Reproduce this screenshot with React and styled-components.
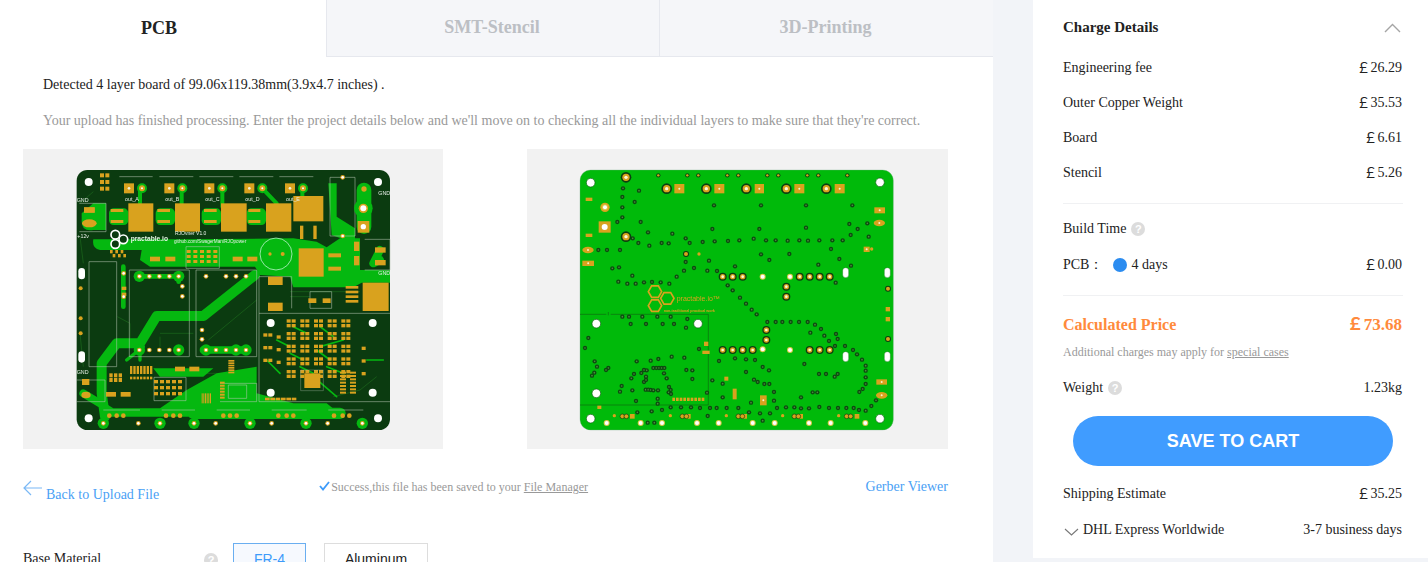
import React from "react";
import styled, { createGlobalStyle } from "styled-components";

const Global = createGlobalStyle`
  html, body { margin: 0; padding: 0; height: 562px; overflow: hidden; background: #f2f4f8; }
  body { font-family: "Liberation Serif", "Times New Roman", serif; font-size: 14px; color: #222; }
  * { box-sizing: border-box; }
`;

const Page = styled.div`display: flex; width: 1428px; height: 562px; overflow: hidden;`;
const Main = styled.main`width: 993px; height: 562px; background: #fff; flex: none; overflow: hidden;`;
const Tabs = styled.div`display: grid; grid-template-columns: 326px 333px 334px; height: 57px;`;
const Tab = styled.div`
  display: flex; align-items: center; justify-content: center; padding-bottom: 1px;
  font-size: 18px; font-weight: 700;
  color: ${p => (p.$active ? "#222" : "#bcbfc4")};
  background: ${p => (p.$active ? "#fff" : "#f5f6f9")};
  border-left: ${p => (p.$active ? "none" : "1px solid #e6e8ee")};
  border-bottom: ${p => (p.$active ? "none" : "1px solid #e6e8ee")};
  padding-right: ${p => (p.$active ? 8 : 2)}px;
`;
const Body = styled.div`padding: 0 45px 0 23px;`;
const Detected = styled.p`margin: 20px 0 0 20px; line-height: 16px; color: #222;`;
const Hint = styled.p`margin: 20px 0 0 20px; line-height: 16px; color: #999;`;
const Previews = styled.div`display: flex; justify-content: space-between; margin-top: 20px;`;
const Preview = styled.div`width: ${p => p.$w}px; height: 300px; background: #f2f2f2;`;
const Board = styled.svg`display: block; width: 100%; height: 100%; filter: blur(0.3px);`;
const LinkRow = styled.div`display: flex; align-items: flex-start; margin-top: 29px; height: 65px;`;
const BackLink = styled.a`display: flex; align-items: flex-start; color: #4a9ff5; line-height: 16px;`;
const BackIcon = styled.svg`width: 20px; height: 18px; margin: 2px 3px 0 0; flex: none;`;
const BackText = styled.span`margin-top: 9px;`;
const Saved = styled.div`display: flex; align-items: center; font-size: 12px; color: #999; line-height: 16px; margin: 1px 0 0 160px;`;
const Check = styled.svg`width: 11px; height: 10px; margin-right: 1px; margin-top: -3px;`;
const Under = styled.span`text-decoration: underline; color: ${p => p.$c || "#999"}; margin-left: ${p => p.$ml || 0}px;`;
const Gerber = styled.a`color: #4a9ff5; line-height: 16px; margin-left: auto; margin-top: 1px;`;
const Material = styled.div`display: flex; align-items: flex-start; height: 40px;`;
const MaterialLabel = styled.span`width: 181px; margin-top: 8px; line-height: 16px;`;
const HelpWrap = styled.span`width: 29px; margin-top: 9px;`;
const Choice = styled.div`
  height: 34px; width: ${p => p.$w}px; margin-right: ${p => p.$mr || 0}px; display: flex; justify-content: center; padding-top: 7px;
  font-family: "Liberation Sans", Arial, sans-serif; font-size: 14px;
  color: ${p => (p.$on ? "#3d9bfa" : "#222")};
  background: ${p => (p.$on ? "#f6f9fe" : "#fff")};
  border: 1px solid ${p => (p.$on ? "#6aaef0" : "#ddd")};
`;
const Help = styled.span`
  display: inline-flex; width: 14px; height: 14px; border-radius: 50%; align-items: center; justify-content: center;
  background: #dcdcdc; color: #fff; font: 700 11px "Liberation Sans", Arial, sans-serif; flex: none;
`;

const Side = styled.aside`
  width: 395px; height: 558px; margin-left: 40px; flex: none; background: #fff; padding: 18px 26px 0 30px;
`;
const Heading = styled.div`display: flex; justify-content: space-between; align-items: center; height: 18px; font-size: 15px; font-weight: 700; color: #222;`;
const Chevron = styled.svg`width: 17px; height: 10px; margin-right: 1px; margin-top: 2px;`;
const Rows = styled.div`margin-top: 14px;`;
const Row = styled.div`
  display: flex; justify-content: space-between; align-items: center;
  height: ${p => p.$h || 35}px; color: #222; line-height: 16px;
`;
const Label = styled.span`display: flex; align-items: center; gap: ${p => p.$gap ?? 5}px;`;
const Money = styled.span`font-family: "Liberation Serif", "Noto Sans CJK SC", serif;`;
const Divider = styled.hr`border: 0; border-top: 1px solid #f0f1f3; margin: ${p => p.$m}; width: 340px;`;
const Radio = styled.i`width: 14px; height: 14px; border-radius: 50%; background: #2b8cf0; margin-left: 10px; margin-right: 4px;`;
const PriceRow = styled(Row)`color: #ff8a3c; font-weight: 700; font-size: 16px;`;
const BigPrice = styled(Money)`font-size: 17px;`;
const Note = styled.div`font-size: 12px; color: #999; line-height: 16px; margin-top: -10px;`;
const WeightRow = styled(Row)`margin-top: 10px;`;
const CartButton = styled.button`
  display: block; width: 320px; height: 50px; margin: 11px 0 10px 10px; border: 0; border-radius: 25px;
  background: #409cff; color: #fff; font: 700 18px "Liberation Sans", Arial, sans-serif;
`;
const DownIcon = styled.svg`width: 15px; height: 8px; margin: 3px -1px 0 1px;`;

const DARK = "#0b3b10", BRIGHT = "#05b810", GOLD = "#d9a21e", SILK = "#e8efe8";

const zones = [
  "M65 160 L100 130 H138 V210 H100 Q65 215 65 185 Z",
  "M100 238 H360 L700 235 L770 245 L800 262 L840 235 H900 V330 L990 330 V368 H905 L880 382 H700 L690 350 L600 345 L585 320 H270 L240 300 L245 270 H120 Q95 265 100 238 Z",
  "M805 70 H830 V170 L885 205 V238 H850 L815 225 Z",
  "M120 720 L160 745 H300 L380 690 L470 640 L590 620 V700 L700 730 H800 L850 770 H120 Z",
  "M280 625 H460 L430 650 H300 Z",
];
const traces = [
  ["M585 345 L430 468 H290 L240 550 H170 L125 610 V700 L135 770", 30],
  ["M400 760 H840", 34],
  ["M190 320 V440", 14],
  ["M70 700 L120 730", 24],
  ["M240 85 V130 M365 85 V140 M487 85 V140 M607 85 L650 130 M727 85 V110", 12],
  ["M912 90 V200", 44],
  ["M960 270 L940 310 L960 300", 24],
  ["M238 349 H356 V365", 14],
  ["M430 570 H560", 22],
  ["M240 570 V600 M200 600 L250 560", 10],
  ["M920 600 H970 M850 540 L780 560 M760 650 L830 710", 5],
  ["M700 500 L740 520 M780 500 L820 530 M690 580 L730 600 M770 570 L810 600 M650 540 L690 560 M720 620 L760 640 M800 620 L850 640 M620 600 L660 640", 5],
  ["M500 660 H560 M480 680 V720", 18],
];
const bigPads = [[205,130,75,85],[345,130,75,85],[483,130,77,85],[618,130,76,85],[700,108,90,76],[716,265,75,85],[908,368,78,85],[624,350,44,25],[624,428,44,25]];
const tops = [207,328,448,568,690];
const thin = [[152,147,38,9],[292,147,38,9],[432,147,38,9],[565,147,36,9],[152,180,38,9],[292,180,38,9],[432,180,38,9],[565,180,36,9],[805,280,38,12],[805,320,38,12],[720,197,10,40],[760,197,10,40],[270,290,30,14],[316,290,30,14],[518,290,30,14],[562,290,30,14],[345,620,30,14],[388,620,30,14],[138,696,30,14],[182,696,30,14],[745,415,24,14],[788,415,24,14],[857,378,38,8],[857,392,38,8],[857,406,38,8],[857,420,38,8],[120,40,12,12],[120,60,12,12],[120,80,12,12],[136,40,12,12],[136,60,12,12],[136,80,12,12],[72,142,32,16],[66,657,22,18],[882,245,16,28],[882,288,16,28],[945,262,32,16],[945,300,32,16],[185,380,14,10],[185,398,14,10]];
const whiteHoles = [[86,66],[954,66],[86,775],[954,775],[632,489],[938,489],[632,698],[938,698]];
const leftDots = [[238,349],[268,349],[298,349],[328,349],[356,349],[367,379],[367,409],[438,349],[498,349],[528,349],[558,349],[426,510],[426,538],[238,570],[268,570],[298,570],[328,570],[356,570],[438,570],[468,570],[498,570],[528,570],[558,570],[130,790],[235,790],[300,790],[402,790],[467,790],[570,790],[635,790],[738,790],[803,790],[907,790],[848,52],[848,228],[191,340],[191,410]];
const halos = [[238,349],[356,349],[438,570],[528,570],[558,570],[356,570],[238,570],[130,790],[300,790],[402,790],[570,790],[738,790],[907,790]];
const smdRows = [];
for (let y = 478; y <= 630; y += 38) for (let x = 680; x <= 850; x += 41) smdRows.push([x, y], [x + 15, y], [x, y + 14], [x + 15, y + 14]);
for (let y = 520; y <= 620; y += 38) smdRows.push([610, y], [625, y], [650, y + 6], [905, y + 40]);
const extra = [];
for (let i = 0; i < 7; i++) extra.push([210 + i * 10, 618, 7, 24], [840, 635 + i * 10, 18, 6], [870, 635 + i * 10, 18, 6], [210 + i * 10, 650, 7, 8]);
for (let i = 0; i < 5; i++) for (let j = 0; j < 3; j++) extra.push([380 + i * 20, 270 + j * 15, 12, 9], [282 + i * 18, 660 + j * 18, 12, 10]);
for (let i = 0; i < 6; i++) extra.push([148 + (i % 3) * 14, 640 + (i > 2 ? 14 : 0), 10, 12], [150 + i * 8, 270 + (i % 2) * 12, 8, 10], [505, 600 + i * 7, 18, 5], [615 + i * 16, 713, 14, 8], [480, 665 + i * 9, 14, 6], [425 + i * 5, 700, 3, 30]);
const silk = [
  "M87 305 H170 V620 H87 Z", "M208 330 H388 V590 H208 Z", "M408 330 H590 V590 H408 Z", "M597 350 V725 H990", "M597 460 H990",
  "M810 52 H885 V228 H810 Z", "M178 50 H278 M298 50 H400 M418 50 H520 M538 50 H640 M658 50 H760", "M130 750 H240 M305 750 H405 M470 750 H570 M635 750 H740 M805 750 H910",
  "M58 130 H138 V215 H58 M50 660 H135 V725 H50", "M378 260 H478 V325 H378 Z M282 652 H378 V722 H282 Z", "M480 670 H590 V725 H480", "M750 395 H815 V445 H750 Z",
  "M914 238 H990 V330 H914 M597 350 H695 V445", "M505 675 H560 V715 H505 Z",
];
const darkLines = ["M60 230 L70 310", "M172 470 L210 490 V560 M300 520 H400 M300 530 V560 M690 395 H900 M690 410 H750", "M60 520 L70 620 M445 540 L590 420 M395 640 H470", "M100 95 L60 130", "M820 710 L900 690 L950 650"];

function LeftBoard() {
  return (
    <Board viewBox="-111 -33 1260 900">
      <rect x="50" y="30" width="940" height="780" rx="32" fill={DARK} />
      {darkLines.map((d, i) => <path key={i} d={d} stroke="#1d6a1d" strokeWidth="2" fill="none" />)}
      {zones.map((d, i) => <path key={i} d={d} fill={BRIGHT} />)}
      {traces.map(([d, w], i) => <path key={i} d={d} stroke={BRIGHT} strokeWidth={w} fill="none" strokeLinejoin="round" strokeLinecap="round" />)}
      {halos.map(([x, y], i) => <circle key={i} cx={x} cy={y} r="17" fill={BRIGHT} />)}
      {silk.map((d, i) => <path key={i} d={d} stroke="#b9c9b6" strokeWidth="1.6" fill="none" />)}
      {[205, 345, 483, 618].map(x => <rect key={x} x={x - 58} y="145" width="58" height="50" fill={BRIGHT} rx="14" />)}
      {bigPads.map(([x, y, w, h], i) => <rect key={i} x={x} y={y} width={w} height={h} fill={GOLD} />)}
      {thin.map(([x, y, w, h], i) => <rect key={i} x={x} y={y} width={w} height={h} fill={GOLD} />)}
      {smdRows.map(([x, y], i) => <rect key={i} x={x} y={y} width="12" height="10" fill={GOLD} />)}
      {extra.map(([x, y, w, h], i) => <rect key={i} x={x} y={y} width={w} height={h} fill={GOLD} />)}
      {tops.map((x, i) => (
        <g key={x}>
          <rect x={x - 15} y="70" width="30" height="30" fill={GOLD} />
          <circle cx={x} cy="85" r="4" fill="#f3f0d8" />
          <circle cx={x + 39} cy="85" r="15" fill={BRIGHT} />
          <circle cx={x + 39} cy="85" r="9" fill={GOLD} />
          <circle cx={x + 39} cy="85" r="3" fill="#fff" />
          <text x={x - 12} y="122" fontSize="16" fill={SILK} fontFamily="Liberation Sans">{"out_" + "ABCDE"[i]}</text>
        </g>
      ))}
      <circle cx="648" cy="282" r="48" fill={BRIGHT} stroke="#dfe" strokeWidth="2" />
      <circle cx="630" cy="282" r="5" fill={GOLD} /><circle cx="668" cy="282" r="6" fill={GOLD} />
      <circle cx="910" cy="145" r="28" fill={BRIGHT} /><circle cx="910" cy="145" r="14" fill={GOLD} /><circle cx="910" cy="145" r="9" fill="#fff" />
      <rect x="893" y="183" width="35" height="35" fill={GOLD} /><circle cx="910" cy="200" r="8" fill="#fff" />
      <ellipse cx="88" cy="190" rx="22" ry="12" fill={GOLD} /><rect x="72" y="142" width="32" height="16" fill={GOLD} />
      <ellipse cx="78" cy="705" rx="14" ry="10" fill={GOLD} />
      <circle cx="912" cy="87" r="8" fill={GOLD} />
      {leftDots.map(([x, y], i) => (
        <g key={i}><circle cx={x} cy={y} r="7" fill={GOLD} /><circle cx={x} cy={y} r="4" fill="#fff" /></g>
      ))}
      {[148, 170, 190, 318, 340, 360, 490, 510, 530, 655, 680, 700, 822, 848, 868].map(x => <circle key={x} cx={x} cy="767" r="7" fill={GOLD} />)}
      {whiteHoles.map(([x, y], i) => <circle key={i} cx={x} cy={y} r="12" fill="#fff" />)}
      <rect x="733" y="640" width="48" height="44" fill={GOLD} />
      <path d="M722 630 H790 V692 H722 Z" stroke="#b9c9b6" fill="none" />
      {[[65, 340], [65, 590]].map(([x, y]) => <rect key={y} x={x - 10} y={y - 16} width="20" height="34" rx="10" fill="#fff" />)}
      {[[62, 385], [62, 475], [62, 520]].map(([x, y]) => <circle key={y} cx={x} cy={y} r="6" fill={GOLD} />)}
      <circle cx="166" cy="224" r="13" fill={DARK} stroke="#fff" strokeWidth="5" />
      <circle cx="190" cy="238" r="13" fill={DARK} stroke="#fff" strokeWidth="5" />
      <circle cx="166" cy="252" r="13" fill={DARK} stroke="#fff" strokeWidth="5" />
      <text x="212" y="243" fontSize="20" fontWeight="700" fill="#e8f8e8" fontFamily="Liberation Sans">practable.io</text>
      <text x="345" y="226" fontSize="15" fill={SILK} fontFamily="Liberation Sans">RJOvner V1.0</text>
      <text x="342" y="250" fontSize="14" fill={SILK} fontFamily="Liberation Sans">github.com/SwagerMan/RJOpower</text>
      <text x="50" y="126" fontSize="16" fill={SILK} fontFamily="Liberation Sans">GND</text>
      <text x="52" y="234" fontSize="16" fill={SILK} fontFamily="Liberation Sans">+12v</text>
      <text x="955" y="106" fontSize="16" fill={SILK} fontFamily="Liberation Sans">GND</text>
      <text x="955" y="346" fontSize="16" fill={SILK} fontFamily="Liberation Sans">GND</text>
      <text x="50" y="642" fontSize="16" fill={SILK} fontFamily="Liberation Sans">GND</text>
    </Board>
  );
}

const vias = [[268,46],[355,46],[388,46],[475,46],[508,46],[595,46],[628,46],[715,46],[748,46],[835,46],[162,85],[210,92],[160,111],[197,126],[160,142],[160,172],[145,186],[215,186],[435,136],[576,136],[711,136],[850,136],[841,192],[895,190],[866,207],[430,207],[571,207],[711,203],[237,217],[310,221],[845,225],[899,230],[191,235],[208,249],[241,257],[278,249],[299,250],[350,235],[362,249],[401,246],[437,244],[477,243],[511,241],[554,236],[591,241],[620,241],[656,242],[691,241],[717,242],[751,241],[790,241],[821,241],[786,267],[88,270],[114,270],[153,270],[576,283],[661,282],[811,297],[601,300],[420,302],[350,306],[748,314],[846,317],[130,325],[150,322],[375,324],[345,332],[415,332],[444,333],[498,319],[190,347],[323,350],[148,365],[175,371],[200,371],[225,367],[249,366],[275,367],[301,371],[800,368],[476,376],[491,391],[513,413],[531,431],[548,449],[563,463],[595,486],[620,486],[640,486],[665,486],[690,486],[716,486],[738,494],[756,507],[801,522],[724,518],[766,527],[806,537],[780,543],[798,558],[828,558],[852,570],[864,583],[879,599],[890,617],[890,632],[890,652],[890,672],[881,687],[871,696],[160,470],[180,470],[220,470],[265,470],[305,470],[355,477],[185,492],[231,492],[281,492],[315,492],[351,503],[58,534],[48,564],[390,567],[450,603],[498,595],[531,598],[558,600],[308,590],[346,593],[245,602],[268,597],[203,604],[77,604],[84,620],[118,624],[111,630],[76,638],[69,647],[195,642],[217,639],[233,631],[225,630],[253,624],[262,624],[270,624],[278,624],[286,624],[352,630],[370,631],[285,640],[187,655],[231,650],[225,666],[231,660],[293,655],[370,657],[158,678],[153,695],[190,691],[230,689],[238,689],[245,690],[253,691],[267,691],[300,681],[305,690],[299,697],[306,702],[430,661],[461,671],[414,698],[461,712],[531,636],[581,621],[600,631],[555,659],[566,666],[586,672],[601,672],[615,696],[615,722],[696,712],[731,697],[745,697],[706,612],[750,642],[771,642],[797,650],[806,642],[201,723],[266,716],[266,731],[546,728],[305,742],[336,742],[366,742],[393,744],[423,744],[443,744],[473,744],[508,744],[540,757],[573,760],[603,760],[624,744],[651,742],[676,742],[696,745],[720,745],[751,741],[780,744],[807,744],[832,744],[854,744],[870,750],[890,752],[907,738],[921,721],[205,757],[248,754],[279,750],[416,768],[236,788],[256,788],[581,782]];
const bigVias = [[171,52],[171,230],[293,86],[412,86],[532,86],[652,86],[772,86],[461,350],[491,350],[521,350],[692,350],[722,350],[752,350],[782,350],[652,380],[652,410],[592,510],[592,540],[461,570],[491,570],[521,570],[551,570],[722,570],[752,570],[782,570]];
const smallGold = [[351,282],[957,386],[957,537]];
const holes = [[65,68],[933,67],[65,776],[933,776],[82,491],[387,491],[82,700]];
const dots = [[108,142],[581,350],[663,350],[581,568],[663,570],[113,789],[215,789],[279,789],[384,789],[449,789],[551,789],[617,789],[720,789],[785,789],[889,789]];
const squares = [[316,72,30,28],[436,72,30,28],[557,72,28,28],[676,72,30,28],[797,72,30,28],[50,113,20,10],[50,221,20,10],[916,142,32,18],[40,302,35,16],[922,658,32,16],[884,260,18,16],[950,441,13,13],[950,471,13,13],[405,545,13,13],[400,572,22,10],[466,650,12,12],[491,686,12,32],[573,706,20,30],[85,737,12,10],[183,762,14,14],[351,762,14,14],[520,762,14,14],[688,762,14,14],[857,762,14,14]];
const hex = (x, y, r) => Array.from({ length: 6 }, (_, i) => {
  const a = (Math.PI / 3) * i;
  return `${x + r * Math.cos(a)},${y + r * Math.sin(a)}`;
}).join(" ");

function RightBoard() {
  return (
    <Board viewBox="-129 -33 1263 900">
      <g transform="translate(-3 0)">
        <rect x="33" y="30" width="940" height="780" rx="32" fill="#00ba0a" stroke="#7a8" strokeWidth="1" />
        <path d="M33 463 H112 M33 735 H418 V463 H125 M118 456 V466" stroke="#0d6a10" strokeWidth="2" fill="none" />
        {squares.map(([x, y, w, h], i) => <g key={i}><rect x={x} y={y} width={w} height={h} fill={GOLD} />{w > 17 && h > 12 ? <circle cx={x + w / 2} cy={y + h / 2} r="3" fill="#f8f3cc" /> : null}</g>)}
        {vias.map(([x, y], i) => <g key={i}><circle cx={x} cy={y} r="6.5" fill="#0c4a10" /><circle cx={x} cy={y} r="2.5" fill="#4f8a40" /></g>)}
        {[268,355,388,475,508,595,628,715,748,835].map(x => <circle key={x} cx={x} cy="46" r="3.5" fill={GOLD} />)}
        {bigVias.map(([x, y], i) => {
          const big = y === 86 || x === 171;
          return <g key={i}><circle cx={x} cy={y} r={big ? 16 : 12} fill="#0c3f10" /><circle cx={x} cy={y} r={big ? 11 : 8} fill={GOLD} /><circle cx={x} cy={y} r={big ? 5 : 4} fill="#fdf7d8" /></g>;
        })}
        {smallGold.map(([x, y], i) => <g key={i}><circle cx={x} cy={y} r="9" fill="#0c3f10" /><circle cx={x} cy={y} r="6" fill={GOLD} /></g>)}
        <rect x="89" y="184" width="36" height="34" fill={GOLD} /><circle cx="107" cy="201" r="9" fill="#fff" />
        <circle cx="108" cy="142" r="14" fill={GOLD} />
        {[[57,270],[931,189],[938,706]].map(([x, y]) => <g key={x}><ellipse cx={x} cy={y} rx="17" ry="10" fill={GOLD} /><circle cx={x} cy={y} r="3" fill="#f8f3cc" /></g>)}
        {dots.map(([x, y], i) => <g key={i}><circle cx={x} cy={y} r="9" fill="#d8c948" /><circle cx={x} cy={y} r="6" fill="#fff" /></g>)}
        {[[390,282],[908,267],[136,767],[304,767],[472,767],[641,767],[809,767]].map(([x, y]) => <circle key={x} cx={x} cy={y} r="5" fill={GOLD} />)}
        {[160,172,340,352,508,520,676,688,833,845].map(x => <circle key={x} cx={x} cy="769" r="7" fill={GOLD} stroke="#0c3f10" strokeWidth="2" />)}
        {holes.map(([x, y], i) => <circle key={i} cx={x} cy={y} r="13" fill="#fff" stroke="#0c5f10" strokeWidth="2" />)}
        {[[830,338],[955,338],[830,590],[955,590]].map(([x, y]) => <rect key={x + y} x={x - 9} y={y - 15} width="18" height="30" rx="9" fill="#fff" stroke="#0c5f10" />)}
        {Array.from({ length: 9 }, (_, i) => <rect key={i} x={310 + i * 11} y="713" width="8" height="10" fill={GOLD} />)}
        <polygon points={hex(258, 395, 20)} fill="none" stroke={GOLD} strokeWidth="5" />
        <polygon points={hex(295, 415, 20)} fill="none" stroke={GOLD} strokeWidth="5" />
        <polygon points={hex(258, 437, 20)} fill="none" stroke={GOLD} strokeWidth="5" />
        <text x="323" y="424" fontSize="21" fill={GOLD} fontFamily="Liberation Sans">practable.io™</text>
        <text x="284" y="456" fontSize="11" fontWeight="700" fill={GOLD} fontFamily="Liberation Sans">non-traditional practical work</text>
      </g>
    </Board>
  );
}

const Q = () => <Help>?</Help>;

export default function App() {
  return (
    <Page>
      <Global />
      <Main>
        <Tabs>
          <Tab $active>PCB</Tab>
          <Tab>SMT-Stencil</Tab>
          <Tab>3D-Printing</Tab>
        </Tabs>
        <Body>
          <Detected>Detected 4 layer board of 99.06x119.38mm(3.9x4.7 inches) .</Detected>
          <Hint>Your upload has finished processing. Enter the project details below and we'll move on to checking all the individual layers to make sure that they're correct.</Hint>
          <Previews>
            <Preview $w={420}><LeftBoard /></Preview>
            <Preview $w={421}><RightBoard /></Preview>
          </Previews>
          <LinkRow>
            <BackLink>
              <BackIcon viewBox="0 0 20 18"><path d="M19 8 H1 M8 1 L1 8 L8 15" stroke="#7ab8f5" strokeWidth="1.2" fill="none" /></BackIcon>
              <BackText>Back to Upload File</BackText>
            </BackLink>
            <Saved>
              <Check viewBox="0 0 11 10"><path d="M1 5 L4 8.5 L10 1" stroke="#3d9bfa" strokeWidth="1.8" fill="none" /></Check>
              Success,this file has been saved to your<Under $ml={3}>File Manager</Under>
            </Saved>
            <Gerber>Gerber Viewer</Gerber>
          </LinkRow>
          <Material>
            <MaterialLabel>Base Material</MaterialLabel>
            <HelpWrap><Q /></HelpWrap>
            <Choice $on $w={73} $mr={18}>FR-4</Choice>
            <Choice $w={104}>Aluminum</Choice>
          </Material>
        </Body>
      </Main>
      <Side>
        <Heading>
          Charge Details
          <Chevron viewBox="0 0 17 10"><path d="M1 9 L8.5 1.5 L16 9" stroke="#a5a5a5" strokeWidth="1.4" fill="none" /></Chevron>
        </Heading>
        <Rows>
          <Row><span>Engineering fee</span><Money>￡26.29</Money></Row>
          <Row><span>Outer Copper Weight</span><Money>￡35.53</Money></Row>
          <Row><span>Board</span><Money>￡6.61</Money></Row>
          <Row><span>Stencil</span><Money>￡5.26</Money></Row>
        </Rows>
        <Divider $m="13px 0 0" />
        <Row $h={49}><Label><span>Build Time</span><Q /></Label></Row>
        <Row $h={23}>
          <Label $gap={0}><span>PCB：</span><Radio /><span>4 days</span></Label>
          <Money>￡0.00</Money>
        </Row>
        <Divider $m="19px 0 0" />
        <PriceRow $h={58}>
          <span>Calculated Price</span>
          <BigPrice>￡73.68</BigPrice>
        </PriceRow>
        <Note>Additional charges may apply for <Under>special cases</Under></Note>
        <WeightRow><Label><span>Weight</span><Q /></Label><span>1.23kg</span></WeightRow>
        <CartButton>SAVE TO CART</CartButton>
        <Row $h={36}><span>Shipping Estimate</span><Money>￡35.25</Money></Row>
        <Row $h={36}>
          <Label>
            <DownIcon viewBox="0 0 15 8"><path d="M1 1 L7.5 7 L14 1" stroke="#777" strokeWidth="1.1" fill="none" /></DownIcon>
            <span>DHL Express Worldwide</span>
          </Label>
          <span>3-7 business days</span>
        </Row>
      </Side>
    </Page>
  );
}
